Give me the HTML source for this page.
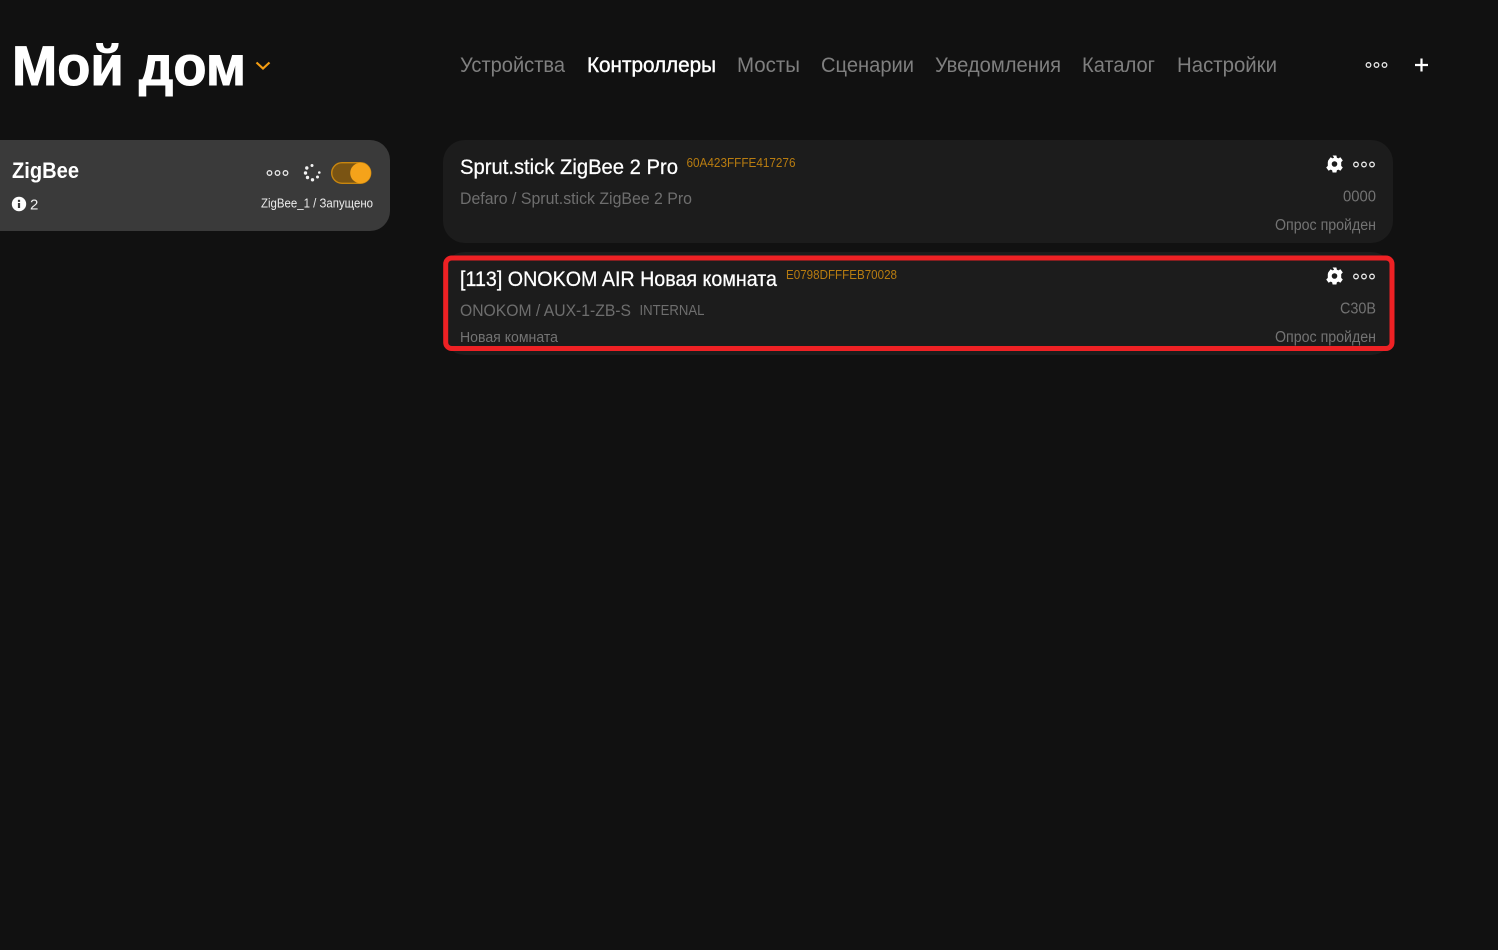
<!DOCTYPE html>
<html lang="ru">
<head>
<meta charset="utf-8">
<title>Контроллеры</title>
<style>
html,body{margin:0;padding:0;background:#111111;width:1498px;height:950px;overflow:hidden}
svg{display:block}
text{font-family:"Liberation Sans",sans-serif}
.nav{font-size:21px;fill:#7f7f7f}
.t{font-size:21px;fill:#fff;stroke:#fff;stroke-width:.25}
.id{font-size:12.5px;fill:#b87c10}
.sub{font-size:17px;fill:#6e6e6e}
.r{font-size:15.5px;fill:#737373}
.d circle{fill:none;stroke:#e8e8e8;stroke-width:1.3}
</style>
</head>
<body>
<svg width="1498" height="950" viewBox="0 0 1498 950" xmlns="http://www.w3.org/2000/svg">
<defs>
<g id="gear"><path fill="#fff" fill-rule="evenodd" d="M-1.9-8.500h3.800l.5 2.200 1.500.7 2-1.100 2.400 3.200-1.600 1.600v3.800l1.600 1.600-2.400 3.200-2-1.100-1.500.7-.5 2.200h-3.800l-.5-2.200-1.500-.7-2 1.100-2.400-3.200 1.600-1.600V-1.900L-6.300-3.500l2.400-3.200 2 1.100 1.500-.7zM0-2.800a2.800 2.800 0 1 0 0 5.600 2.800 2.800 0 0 0 0-5.600z"/></g>
<g id="dots" class="d"><circle cx="-8" cy="0" r="2.300"/><circle cx="0" cy="0" r="2.300"/><circle cx="8" cy="0" r="2.300"/></g>
</defs>

<text x="12" y="85" font-size="56" font-weight="700" fill="#fff" stroke="#fff" stroke-width="1" textLength="234" lengthAdjust="spacingAndGlyphs">Мой дом</text>
<path d="M256.500 62.500L263 68.500L269.500 62.500" fill="none" stroke="#f39c12" stroke-width="2.200"/>

<text class="nav" x="460" y="72" textLength="105" lengthAdjust="spacingAndGlyphs">Устройства</text>
<text class="nav" x="587" y="72" style="fill:#fff" stroke="#fff" stroke-width=".4" textLength="129" lengthAdjust="spacingAndGlyphs">Контроллеры</text>
<text class="nav" x="737" y="72" textLength="63" lengthAdjust="spacingAndGlyphs">Мосты</text>
<text class="nav" x="821" y="72" textLength="93" lengthAdjust="spacingAndGlyphs">Сценарии</text>
<text class="nav" x="935" y="72" textLength="126" lengthAdjust="spacingAndGlyphs">Уведомления</text>
<text class="nav" x="1082" y="72" textLength="73" lengthAdjust="spacingAndGlyphs">Каталог</text>
<text class="nav" x="1177" y="72" textLength="100" lengthAdjust="spacingAndGlyphs">Настройки</text>

<use href="#dots" x="1376.500" y="65"/>
<path d="M1421.500 58.500v13M1415 65h13" stroke="#fff" stroke-width="2.200" fill="none"/>

<!-- left card -->
<path d="M0 140H370a20 20 0 0 1 20 20V211a20 20 0 0 1-20 20H0z" fill="#3a3a3a"/>
<text x="12" y="178" font-size="22" font-weight="700" fill="#fff" textLength="67" lengthAdjust="spacingAndGlyphs">ZigBee</text>
<circle cx="19" cy="204" r="7.200" fill="#fff"/>
<rect x="17.900" y="203" width="2.200" height="5" fill="#3a3a3a"/>
<rect x="17.900" y="199.800" width="2.200" height="2.100" fill="#3a3a3a"/>
<text x="30" y="209.500" font-size="15" fill="#f0f0f0">2</text>
<use href="#dots" x="277.500" y="173"/>
<g fill="#f2f2f2">
<circle cx="312" cy="165.500" r="1.500"/><circle cx="306.800" cy="168" r="1.700"/><circle cx="305.500" cy="173" r="1.700"/><circle cx="307.500" cy="177.500" r="1.700"/><circle cx="312.500" cy="179.800" r="1.700"/><circle cx="317.500" cy="177" r="1.500"/><circle cx="319.300" cy="172.500" r="1.300"/>
</g>
<rect x="331.700" y="162.700" width="39" height="20.600" rx="10.300" fill="#7a5413" stroke="#c8860f" stroke-width="1.400"/>
<circle cx="360.500" cy="173" r="10.300" fill="#f5a31a"/>
<text x="261" y="207.500" font-size="13" fill="#ececec" textLength="112" lengthAdjust="spacingAndGlyphs">ZigBee_1 / Запущено</text>

<!-- card 1 -->
<rect x="443" y="140" width="950" height="103" rx="22" fill="#1c1c1c"/>
<text class="t" x="460" y="174" textLength="218" lengthAdjust="spacingAndGlyphs">Sprut.stick ZigBee 2 Pro</text>
<text class="id" x="686.500" y="167" textLength="109" lengthAdjust="spacingAndGlyphs">60A423FFFE417276</text>
<text class="sub" x="460" y="204" textLength="232" lengthAdjust="spacingAndGlyphs">Defaro / Sprut.stick ZigBee 2 Pro</text>
<use href="#gear" x="1334.500" y="164"/>
<use href="#dots" x="1364" y="164.500"/>
<text class="r" x="1343" y="201.500" textLength="33" lengthAdjust="spacingAndGlyphs">0000</text>
<text class="r" x="1275" y="230" textLength="101" lengthAdjust="spacingAndGlyphs">Опрос пройден</text>

<!-- card 2 -->
<rect x="443" y="252" width="950" height="103" rx="22" fill="#1c1c1c"/>
<rect x="445.700" y="258" width="946.300" height="90.500" rx="6" fill="none" stroke="#ee2124" stroke-width="5"/>
<text class="t" x="460" y="286" textLength="317" lengthAdjust="spacingAndGlyphs">[113] ONOKOM AIR Новая комната</text>
<text class="id" x="786" y="279" textLength="111" lengthAdjust="spacingAndGlyphs">E0798DFFFEB70028</text>
<text class="sub" x="460" y="316" textLength="171" lengthAdjust="spacingAndGlyphs">ONOKOM / AUX-1-ZB-S</text>
<text x="639.500" y="315" font-size="15" fill="#6e6e6e" textLength="65" lengthAdjust="spacingAndGlyphs">INTERNAL</text>
<text x="460" y="342" font-size="15" fill="#737373" textLength="98" lengthAdjust="spacingAndGlyphs">Новая комната</text>
<use href="#gear" x="1334.500" y="276"/>
<use href="#dots" x="1364" y="276.500"/>
<text class="r" x="1340" y="313.500" textLength="36" lengthAdjust="spacingAndGlyphs">C30B</text>
<text class="r" x="1275" y="342" textLength="101" lengthAdjust="spacingAndGlyphs">Опрос пройден</text>
</svg>
</body>
</html>
